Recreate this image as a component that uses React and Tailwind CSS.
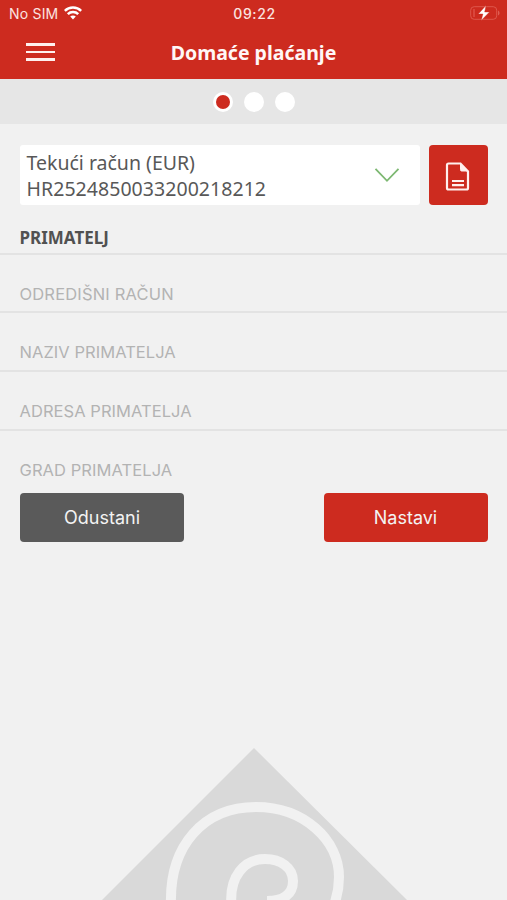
const fields = ['ODREDIŠNI RAČUN', 'NAZIV PRIMATELJA', 'ADRESA PRIMATELJA', 'GRAD PRIMATELJA'];
const tracking = ['tracking-[0.17px]', 'tracking-[0.05px]', 'tracking-[0.05px]', 'tracking-[0.07px]'];

function StatusBar() {
  return (
    <div className="grid h-[27px] grid-cols-3 items-center pl-[9px] pr-[7px] font-['Inter',sans-serif] text-[14px] text-[#fbe3e0]">
      <div className="flex items-center gap-[6px]">
        <span className="tracking-[0.2px]">No SIM</span>
        <svg className="-mt-px" width="18" height="14" viewBox="0 0 18 14" fill="none" stroke="#fff" strokeWidth="2.5">
          <path d="M.8 4.9C5.2.4 12.8.4 17.2 4.9" />
          <path d="M3.8 8.1c2.8-2.8 7.6-2.8 10.4 0" />
          <path d="M6.2 10.5c1.6-1.4 4-1.4 5.6 0L9 13.4z" fill="#fff" stroke="none" />
        </svg>
      </div>
      <span className="text-center font-medium tracking-[0.6px]">09:22</span>
      <svg className="-mt-px justify-self-end" width="30" height="16" viewBox="0 0 30 16" fill="none">
        <rect x=".7" y="1.7" width="26" height="12.6" rx="3.5" stroke="#de574c" />
        <path d="M4 4v8" stroke="#dc5147" strokeWidth="1.5" />
        <path d="M28.2 5.5c1.7 1 1.7 4 0 5z" fill="#e36a60" />
        <path d="M16 .5 8.3 9h4.6l-1.7 6.5L19.5 7h-4.8z" fill="#fff" stroke="#cd2b1f" strokeWidth=".4" />
      </svg>
    </div>
  );
}

export default function App() {
  return (
    <main className="flex h-[900px] w-[507px] flex-col overflow-hidden bg-[#f1f1f1] font-['Noto_Sans',sans-serif]">
      <header className="h-[79px] shrink-0 bg-[#cd2b1f]">
        <StatusBar />
        <div className="grid h-[50px] grid-cols-[90px_1fr_90px] items-center">
          <div className="ml-[26px] flex w-[29px] flex-col gap-[5px]">
            <i className="h-[2.5px] bg-[#fff0ee]" />
            <i className="h-[2.5px] bg-[#fff0ee]" />
            <i className="h-[2.5px] bg-[#fff0ee]" />
          </div>
          <h1 className="pt-px text-center text-[19.5px] font-bold text-[#fff7f6]">Domaće plaćanje</h1>
        </div>
      </header>
      <div className="flex h-[45px] shrink-0 items-center justify-center gap-[11px] bg-[#e6e6e6]">
        <span className="flex size-[20px] items-center justify-center rounded-full bg-white">
          <i className="size-[14px] rounded-full bg-[#cd2b1f]" />
        </span>
        <span className="size-[20px] rounded-full bg-white" />
        <span className="size-[20px] rounded-full bg-white" />
      </div>
      <section className="mt-[21px] flex h-[60px] shrink-0 gap-[9px] pl-[20px] pr-[19.5px]">
        <div className="flex flex-1 items-center justify-between rounded-[3px] bg-white pl-[6.5px] pr-[20px]">
          <div className="pt-[2px] text-[19.5px] leading-[26px] text-[#585858]">
            <p>Tekući račun (EUR)</p>
            <p className="tracking-[0.05px]">HR2524850033200218212</p>
          </div>
          <svg width="26" height="16" viewBox="0 0 26 16" fill="none" stroke="#7db872" strokeWidth="1.8">
            <path d="m1.5 1.8 11.5 12 11.5-12" />
          </svg>
        </div>
        <button className="flex w-[58.5px] items-center justify-center rounded-[4px] bg-[#cd2b1f]">
          <svg className="mr-[2px] mt-[3px]" width="26" height="30" viewBox="0 0 26 30" fill="none" stroke="#fff0ee" strokeWidth="2.2">
            <path d="M16.5 1.5H4.5c-1 0-1.5.5-1.5 1.5v23c0 1 .5 1.5 1.5 1.5h18c1 0 1.5-.5 1.5-1.5V9.5z" />
            <path d="M16.5 1.5v6.2c0 1 .4 1.3 1.3 1.3H24z" fill="#fff0ee" strokeWidth="1" />
            <path d="M8 19h12M8 23.2h12" />
          </svg>
        </button>
      </section>
      <h2 className="mt-[20px] h-[27.5px] shrink-0 pl-[19.5px] text-[17px] font-bold leading-[25px] text-[#515151]">PRIMATELJ</h2>
      <section className="flex shrink-0 flex-col font-['Inter',sans-serif] text-[16.5px] text-[#b3b3b3]">
        {fields.map((field, i) => (
          <div key={field} className="flex h-[58.7px] items-end border-t-2 border-[#e3e3e3] pb-[7.5px] pl-[19.5px]">
            <span className={tracking[i] + ' whitespace-nowrap leading-[20px]'}>{field}</span>
          </div>
        ))}
      </section>
      <div className="mt-[6px] flex h-[49px] shrink-0 justify-between pl-[20px] pr-[19.5px] font-['Inter',sans-serif] text-[18px] text-[#f3f3f3]">
        <button className="w-[164px] rounded-[4px] bg-[#5a5a5a]">Odustani</button>
        <button className="w-[164px] rounded-[4px] bg-[#cd2b1f]">Nastavi</button>
      </div>
      <svg className="mt-auto shrink-0" width="507" height="160" viewBox="0 740 507 160" fill="none">
        <path d="M254 748 407 900H102z" fill="#d9d9d9" />
        <g stroke="#f1f1f1" strokeWidth="10">
          <path d="M171 905C169 845 204 807 256 807C304 807 339 840 339 877C339 887 338 894 334 905" />
          <path d="M231.5 905C229 877 244 859 265 859C281 859 293 868 293 881C293 894 284 901 267 901" />
        </g>
      </svg>
    </main>
  );
}
